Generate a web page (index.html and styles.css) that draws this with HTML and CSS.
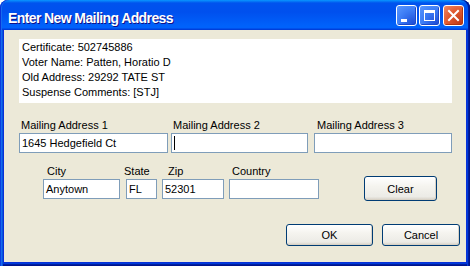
FILE: index.html
```html
<!DOCTYPE html>
<html>
<head>
<meta charset="utf-8">
<link rel="stylesheet" href="styles.css">
</head>
<body>
<div class="window">
  <div class="titlebar">
    <span class="title">Enter New Mailing Address</span>
    <div class="controls">
      <div class="tbtn tbtn-blue">
        <svg width="19" height="19" viewBox="0 0 19 19"><rect x="4" y="13" width="6" height="3" fill="#fff"/></svg>
      </div>
      <div class="tbtn tbtn-blue">
        <svg width="19" height="19" viewBox="0 0 19 19"><path d="M4 4h11v11h-11z M5 7v7h9v-7z" fill="#fff" fill-rule="evenodd"/></svg>
      </div>
      <div class="tbtn tbtn-red">
        <svg width="19" height="19" viewBox="0 0 19 19"><path d="M5 5L14 14M14 5L5 14" stroke="#fff" stroke-width="2" stroke-linecap="square"/></svg>
      </div>
    </div>
  </div>
  <div class="frame">
    <div class="client">
      <div class="info">
        <div>Certificate: 502745886</div>
        <div>Voter Name: Patten, Horatio D</div>
        <div>Old Address: 29292 TATE ST</div>
        <div>Suspense Comments: [STJ]</div>
      </div>
      <div class="row row-addr">
        <div class="field f-addr1">
          <div class="label">Mailing Address 1</div>
          <div class="input">1645 Hedgefield Ct</div>
        </div>
        <div class="field f-addr2">
          <div class="label">Mailing Address 2</div>
          <div class="input"><span class="caret"></span></div>
        </div>
        <div class="field f-addr3">
          <div class="label l-addr3">Mailing Address 3</div>
          <div class="input"></div>
        </div>
      </div>
      <div class="row row-city">
        <div class="field f-city">
          <div class="label l-city">City</div>
          <div class="input">Anytown</div>
        </div>
        <div class="field f-state">
          <div class="label l-state">State</div>
          <div class="input">FL</div>
        </div>
        <div class="field f-zip">
          <div class="label l-zip">Zip</div>
          <div class="input">52301</div>
        </div>
        <div class="field f-country">
          <div class="label l-country">Country</div>
          <div class="input"></div>
        </div>
        <div class="btn btn-clear">Clear</div>
      </div>
      <div class="actions">
        <div class="btn btn-ok">OK</div>
        <div class="btn btn-cancel">Cancel</div>
      </div>
    </div>
  </div>
</div>
</body>
</html>
```
FILE: styles.css
```css
html, body {
  margin: 0;
  padding: 0;
  background: #ffffff;
}

body {
  font-family: "Liberation Sans", Arial, sans-serif;
  font-size: 11px;
  color: #000;
}

.window {
  width: 470px;
  height: 266px;
  display: flex;
  flex-direction: column;
}

.titlebar {
  height: 30px;
  flex: none;
  display: flex;
  align-items: flex-start;
  justify-content: space-between;
  border-radius: 8px 8px 0 0;
  background: linear-gradient(180deg, #0997ff 0px, #0053ee 3px, #0050ee 12px, #0062fb 26px, #0062fb 28px, #0040dd 29px, #003dd7 30px);
  box-shadow: inset 1px 0 #0831d9, inset -1px 0 #00138c, inset 2px 0 #166aee, inset -2px 0 #001ea0;
}

.title {
  padding: 6px 0 0 8px;
  line-height: 24px;
  font-size: 14px;
  font-weight: bold;
  letter-spacing: -0.6px;
  color: #ffffff;
  text-shadow: 1px 1px #0f1089;
}

.controls {
  display: flex;
  gap: 2px;
  margin: 5px 6px 0 0;
}

.tbtn {
  width: 21px;
  height: 21px;
  box-sizing: border-box;
  border: 1px solid #ffffff;
  border-radius: 3px;
  display: flex;
  align-items: center;
  justify-content: center;
}

.tbtn-blue {
  background: radial-gradient(circle at 85% 90%, #1f4fd8 0%, #3c7cf5 55%, #5a98ff 100%);
  box-shadow: inset -1px -1px #1c48c8;
}

.tbtn-red {
  margin-left: 1px;
  background: radial-gradient(circle at 85% 90%, #c23b18 0%, #e0592f 55%, #f08a67 100%);
  box-shadow: inset -1px -1px #b1350f;
}

.frame {
  flex: 1;
  display: flex;
  padding: 0 4px 4px 4px;
  background: #0831d9;
  box-shadow: inset 1px 0 #0a3fe0, inset 2px 0 #166aee, inset 3px 0 #0855dd,
              inset -1px 0 #00138c, inset -2px 0 #001ea0, inset -3px 0 #003bda,
              inset 0 -1px #00138c, inset 0 -2px #001ea0, inset 0 -3px #003bda;
}

.client {
  flex: 1;
  background: #ece9d8;
  padding: 9px 6px 0 15px;
  display: flex;
  flex-direction: column;
}

.info {
  width: 433px;
  height: 64px;
  box-sizing: border-box;
  background: #ffffff;
  padding: 1px 0 0 3px;
  line-height: 15px;
}

.row {
  display: flex;
  align-items: flex-start;
}

.row-addr {
  margin-top: 15px;
}

.row-city {
  margin-top: 11px;
}

.field {
  display: flex;
  flex-direction: column;
}

.label {
  height: 14px;
  line-height: 14px;
  margin-bottom: 1px;
  padding-left: 2px;
  white-space: nowrap;
}

.input {
  height: 20px;
  box-sizing: border-box;
  border: 1px solid #7f9db9;
  background: #ffffff;
  padding: 0 2px;
  line-height: 18px;
  white-space: nowrap;
}

.caret {
  display: inline-block;
  width: 1px;
  height: 14px;
  background: #000;
  vertical-align: -3px;
}

.f-addr1 { width: 149px; }
.f-addr2 { width: 137px; margin-left: 3px; }
.f-addr3 { width: 138px; margin-left: 6px; }
.l-addr3 { padding-left: 3px; }

.f-city { width: 77px; margin-left: 24px; }
.l-city { padding-left: 4px; }
.f-state { width: 31px; margin-left: 6px; }
.l-state { padding-left: 0; margin-left: -2px; }
.f-zip { width: 62px; margin-left: 5px; }
.l-zip { padding-left: 6px; }
.f-country { width: 90px; margin-left: 5px; }
.l-country { padding-left: 3px; }

.btn {
  box-sizing: border-box;
  border: 1px solid #003c74;
  border-radius: 3px;
  background: linear-gradient(180deg, #ffffff 0%, #f5f4ef 40%, #ecebe6 85%, #d6d0c5 100%);
  box-shadow: inset -1px -1px #d8d2c6;
  display: flex;
  align-items: center;
  justify-content: center;
}

.btn-clear {
  width: 73px;
  height: 25px;
  margin: 12px 0 0 45px;
}

.actions {
  display: flex;
  justify-content: flex-end;
  gap: 9px;
  margin-top: 23px;
}

.btn-ok {
  width: 87px;
  height: 22px;
}

.btn-cancel {
  width: 78px;
  height: 22px;
}
```
